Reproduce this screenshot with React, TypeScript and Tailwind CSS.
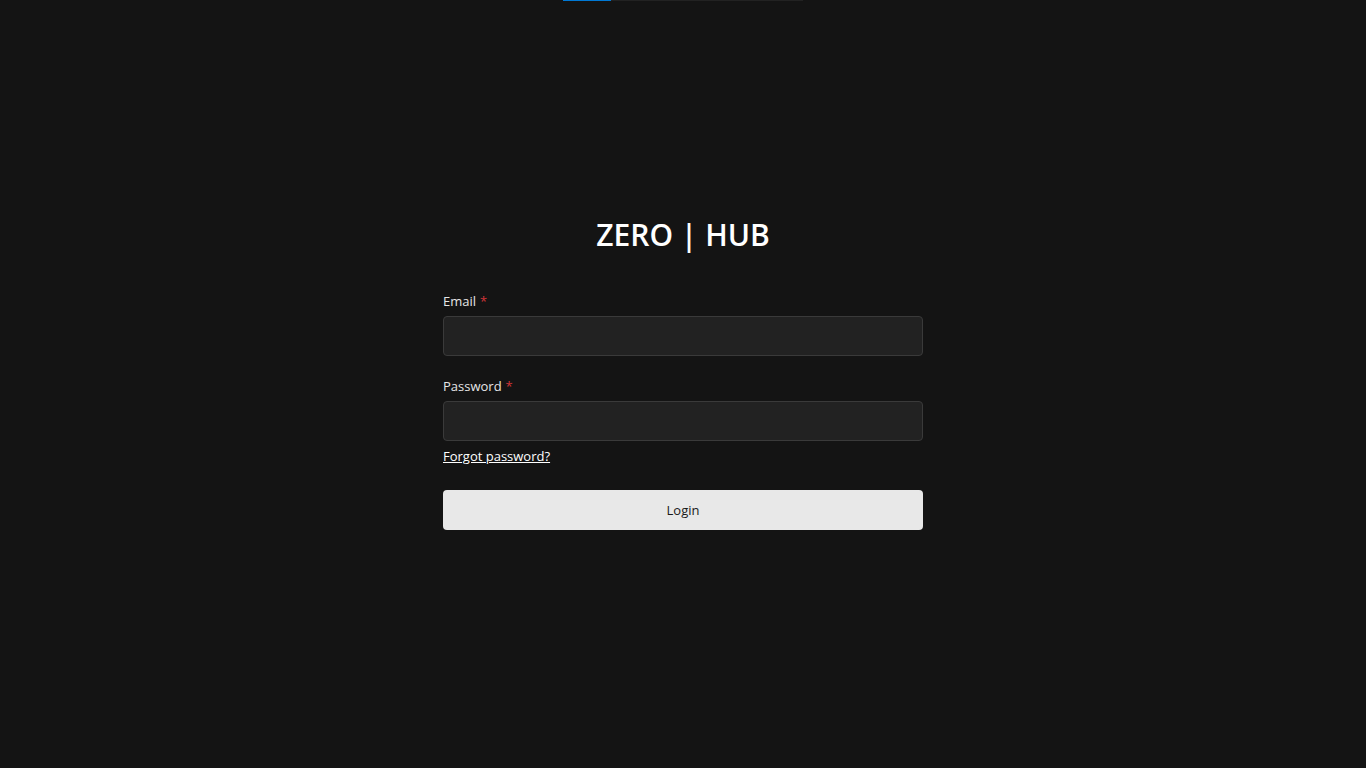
import React, { useState } from 'react';

const Field = ({ label, type, value, onChange }: { label: string; type: string; value: string; onChange: (v: string) => void }) => (
  <div className="flex flex-col">
    <label className="text-[13px] leading-5 text-[#e6e6e6] mb-[5px]">
      {label}
      <span className="text-[#d13438] ml-1">*</span>
    </label>
    <input
      type={type}
      value={value}
      onChange={(e) => onChange(e.target.value)}
      className="h-10 w-full rounded-[4px] border border-[#3a3a3a] bg-[#222222] px-3 text-sm text-white outline-none focus:border-[#0078d4]"
    />
  </div>
);

const App = () => {
  const [email, setEmail] = useState('');
  const [password, setPassword] = useState('');

  return (
    <div className="min-h-screen w-full bg-[#141414] font-['Segoe_UI','Open_Sans',sans-serif]">
      <div className="mx-auto flex h-px w-[240px] bg-[#222222]">
        <div className="h-px w-12 bg-[#0078d4]" />
      </div>
      <div className="mx-auto flex w-[480px] flex-col pt-[214px]">
        <h1 className="text-center text-[30px] font-semibold leading-10 text-white">ZERO | HUB</h1>
        <form className="mt-9 flex flex-col" onSubmit={(e) => e.preventDefault()}>
          <Field label="Email" type="email" value={email} onChange={setEmail} />
          <div className="mt-5">
            <Field label="Password" type="password" value={password} onChange={setPassword} />
          </div>
          <a href="#" className="mt-[5px] self-start text-[13px] leading-5 text-white underline">
            Forgot password?
          </a>
          <button
            type="submit"
            className="mt-6 h-10 w-full rounded-[4px] bg-[#e8e8e8] pt-px text-[13px] text-[#1a1a1a]"
          >
            Login
          </button>
        </form>
      </div>
    </div>
  );
};

export default App;
